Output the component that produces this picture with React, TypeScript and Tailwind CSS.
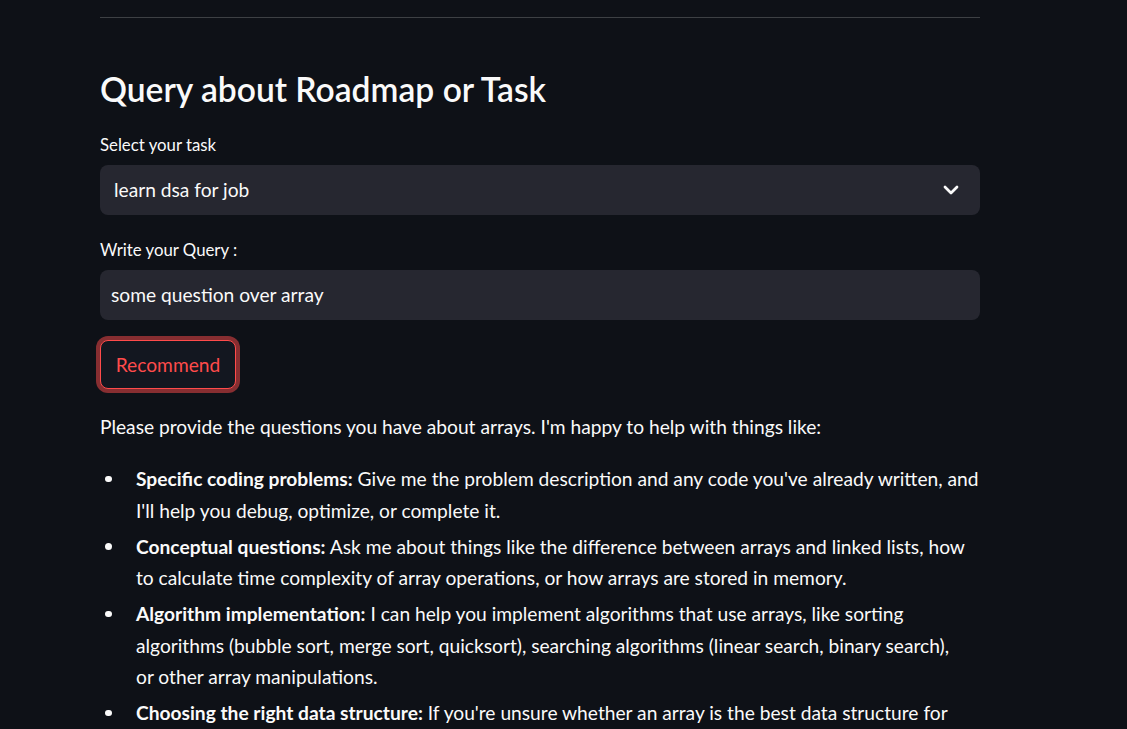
import { ChevronDown } from "lucide-react";

const items: { title: string; lines: string[] }[] = [
  {
    title: "Specific coding problems:",
    lines: [
      " Give me the problem description and any code you've already written, and",
      "I'll help you debug, optimize, or complete it.",
    ],
  },
  {
    title: "Conceptual questions:",
    lines: [
      " Ask me about things like the difference between arrays and linked lists, how",
      "to calculate time complexity of array operations, or how arrays are stored in memory.",
    ],
  },
  {
    title: "Algorithm implementation:",
    lines: [
      " I can help you implement algorithms that use arrays, like sorting",
      "algorithms (bubble sort, merge sort, quicksort), searching algorithms (linear search, binary search),",
      "or other array manipulations.",
    ],
  },
  {
    title: "Choosing the right data structure:",
    lines: [" If you're unsure whether an array is the best data structure for"],
  },
];

export default function App() {
  return (
    <div
      className="min-h-screen bg-[#0e1117] text-[#fafafa]"
      style={{ fontFamily: "Lato, 'Noto Sans', sans-serif" }}
    >
      <div className="ml-[100px] flex w-[880px] flex-col">
        <div className="mt-[17px] h-px w-full bg-[#3d4044]" />

        <h3 className="mt-[51px] text-[33.6px] font-semibold leading-[40px]">
          Query about Roadmap or Task
        </h3>

        <label className="mt-[23.5px] text-[16.8px] leading-[24px]">Select your task</label>
        <div className="mt-[8.5px] flex h-[50px] items-center justify-between rounded-[8px] bg-[#262730] pl-[14px] pr-[17px]">
          <span className="text-[19.2px] leading-[24px]">learn dsa for job</span>
          <ChevronDown size={24} strokeWidth={2.75} className="text-[#fafafa]" />
        </div>

        <label className="mt-[22.5px] text-[16.8px] leading-[24px]">Write your Query :</label>
        <div className="mt-[8.5px] flex h-[50px] items-center rounded-[8px] bg-[#262730] pl-[11px]">
          <span className="text-[19.2px] leading-[24px]">some question over array</span>
        </div>

        <div className="mt-[20px] flex">
          <button className="flex h-[49px] w-[136px] items-center justify-center rounded-[8px] border border-[#ff4b4b] bg-[#131720] pt-[1px] text-[19.2px] text-[#ff4b4b] shadow-[0_0_0_4px_rgba(255,75,75,0.5)]">
            Recommend
          </button>
        </div>

        <p className="mt-[22px] text-[19.2px] leading-[31.5px]">
          Please provide the questions you have about arrays. I'm happy to help with things like:
        </p>

        <ul className="mt-[20.75px] flex flex-col gap-[4.5px] pb-[4px]">
          {items.map((it) => (
            <li key={it.title} className="flex text-[19.2px] leading-[31.5px]">
              <span className="flex h-[31.5px] w-[36px] shrink-0 items-center">
                <span className="ml-[5px] h-[6.5px] w-[6.5px] rounded-full bg-[#fafafa]" />
              </span>
              <span className="flex flex-col">
                {it.lines.map((ln, i) => (
                  <span key={i} className="whitespace-nowrap">
                    {i === 0 && <strong className="font-bold">{it.title}</strong>}
                    {ln}
                  </span>
                ))}
              </span>
            </li>
          ))}
        </ul>
      </div>
    </div>
  );
}
